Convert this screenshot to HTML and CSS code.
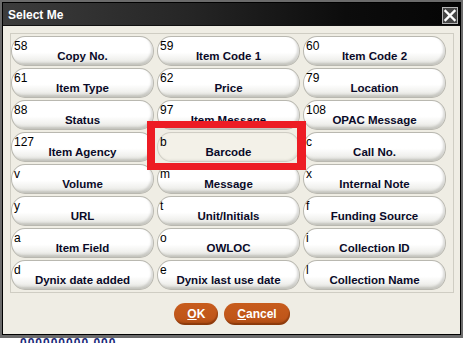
FILE: index.html
```html
<!DOCTYPE html>
<html>
<head>
<meta charset="utf-8">
<link rel="stylesheet" href="styles.css">
</head>
<body>
<div class="window">
  <div class="frame">
    <div class="titlebar">
      <span class="title">Select Me</span>
      <span class="close">
        <svg width="16" height="17" viewBox="0 0 16 17">
          <rect x="0.5" y="0.5" width="15" height="16" fill="#454545" stroke="#b5b5b5"/>
          <path d="M3.5 4 L12.5 13 M12.5 4 L3.5 13" stroke="#fff" stroke-width="2.4" stroke-linecap="square"/>
        </svg>
      </span>
    </div>
    <div class="body">
      <div class="panel">
        <div class="opt"><span class="num">58</span><span class="name">Copy No.</span></div>
        <div class="opt"><span class="num">59</span><span class="name">Item Code 1</span></div>
        <div class="opt"><span class="num">60</span><span class="name">Item Code 2</span></div>
        <div class="opt"><span class="num">61</span><span class="name">Item Type</span></div>
        <div class="opt"><span class="num">62</span><span class="name">Price</span></div>
        <div class="opt"><span class="num">79</span><span class="name">Location</span></div>
        <div class="opt"><span class="num">88</span><span class="name">Status</span></div>
        <div class="opt"><span class="num">97</span><span class="name">Item Message</span></div>
        <div class="opt"><span class="num">108</span><span class="name">OPAC Message</span></div>
        <div class="opt"><span class="num">127</span><span class="name">Item Agency</span></div>
        <div class="opt selected"><span class="num">b</span><span class="name">Barcode</span></div>
        <div class="opt"><span class="num">c</span><span class="name">Call No.</span></div>
        <div class="opt"><span class="num">v</span><span class="name">Volume</span></div>
        <div class="opt"><span class="num">m</span><span class="name">Message</span></div>
        <div class="opt"><span class="num">x</span><span class="name">Internal Note</span></div>
        <div class="opt"><span class="num">y</span><span class="name">URL</span></div>
        <div class="opt"><span class="num">t</span><span class="name">Unit/Initials</span></div>
        <div class="opt"><span class="num">f</span><span class="name">Funding Source</span></div>
        <div class="opt"><span class="num">a</span><span class="name">Item Field</span></div>
        <div class="opt"><span class="num">o</span><span class="name">OWLOC</span></div>
        <div class="opt"><span class="num">i</span><span class="name">Collection ID</span></div>
        <div class="opt"><span class="num">d</span><span class="name">Dynix date added</span></div>
        <div class="opt"><span class="num">e</span><span class="name">Dynix last use date</span></div>
        <div class="opt"><span class="num">l</span><span class="name">Collection Name</span></div>
      </div>
      <div class="actions">
        <span class="btn"><u>O</u>K</span>
        <span class="btn"><u>C</u>ancel</span>
      </div>
    </div>
  </div>
  <div class="highlight"></div>
</div>
<div class="below"><span>000000000 000</span></div>
</body>
</html>
```
FILE: styles.css
```css
html, body {
  margin: 0;
  padding: 0;
  background: #ffffff;
}
body {
  font-family: "Liberation Sans", Arial, sans-serif;
  width: 463px;
  height: 343px;
  overflow: hidden;
}
.window {
  position: relative;
  width: 463px;
  height: 338px;
  box-sizing: border-box;
  border: 2px solid #6b6b6b;
  border-bottom-width: 3px;
  background: #6b6b6b;
}
.frame {
  height: 100%;
  box-sizing: border-box;
  border: 1px solid #000;
  display: flex;
  flex-direction: column;
}
.titlebar {
  height: 22px;
  flex: none;
  display: flex;
  align-items: center;
  justify-content: space-between;
  background: linear-gradient(to right, #3c3c3c 0%, #262626 40%, #0c0c0c 75%, #050505 100%);
  border-bottom: 1px solid #111;
  padding: 0 2px 0 5px;
}
.title {
  color: #fff;
  font-weight: bold;
  font-size: 12px;
  line-height: 14px;
  margin-top: 1px;
}
.close {
  display: flex;
  margin-top: 3px;
}
.body {
  flex: 1;
  background: #efede4;
  padding: 7px 6px 0 7px;
  display: flex;
  flex-direction: column;
}
.panel {
  border: 1px solid #cfcdc3;
  padding: 2px 4px 2px 0;
  display: grid;
  grid-template-columns: repeat(3, 143px);
  grid-auto-rows: 30px;
  gap: 2px 3px;
}
.opt {
  box-sizing: border-box;
  border: 1px solid #b9b8b0;
  border-radius: 14px / 15px;
  background: linear-gradient(to bottom, #ffffff 0%, #ffffff 55%, #f1f1ee 80%, #dcdcd6 100%);
  box-shadow: inset -2px -2px 2px rgba(120,120,110,0.25);
  display: flex;
  flex-direction: column;
}
.opt.selected {
  background: #f3f1e8;
  border-color: #cfcdc4;
  box-shadow: inset -1px -1px 2px rgba(120,120,110,0.15);
}
.num {
  font-size: 12px;
  line-height: 10px;
  padding: 4px 0 0 2px;
  color: #000;
}
.name {
  font-size: 11.5px;
  font-weight: bold;
  line-height: 13px;
  text-align: center;
  color: #0a0a28;
  margin-top: -1px;
}
.actions {
  display: flex;
  justify-content: center;
  gap: 6px;
  margin-top: 10px;
}
.btn {
  height: 22px;
  box-sizing: border-box;
  padding: 0 13px;
  border-radius: 11px;
  background: linear-gradient(to bottom, #c75c1c 0%, #c0561a 70%, #a9480f 100%);
  box-shadow: inset -1px -2px 1px rgba(80,30,0,0.35);
  color: #fff;
  font-weight: bold;
  font-size: 12px;
  line-height: 22px;
}
.highlight {
  position: absolute;
  left: 145px;
  top: 119px;
  width: 159px;
  height: 49px;
  box-sizing: border-box;
  border: 7px solid #ed1c24;
  border-left-width: 8px;
  border-right-width: 9px;
}
.below {
  height: 5px;
  overflow: hidden;
  padding-left: 20px;
}
.below span {
  display: block;
  font-size: 12px;
  font-weight: bold;
  color: #1a2a7a;
  line-height: 12px;
  margin-top: -1px;
  letter-spacing: 1px;
}
```
